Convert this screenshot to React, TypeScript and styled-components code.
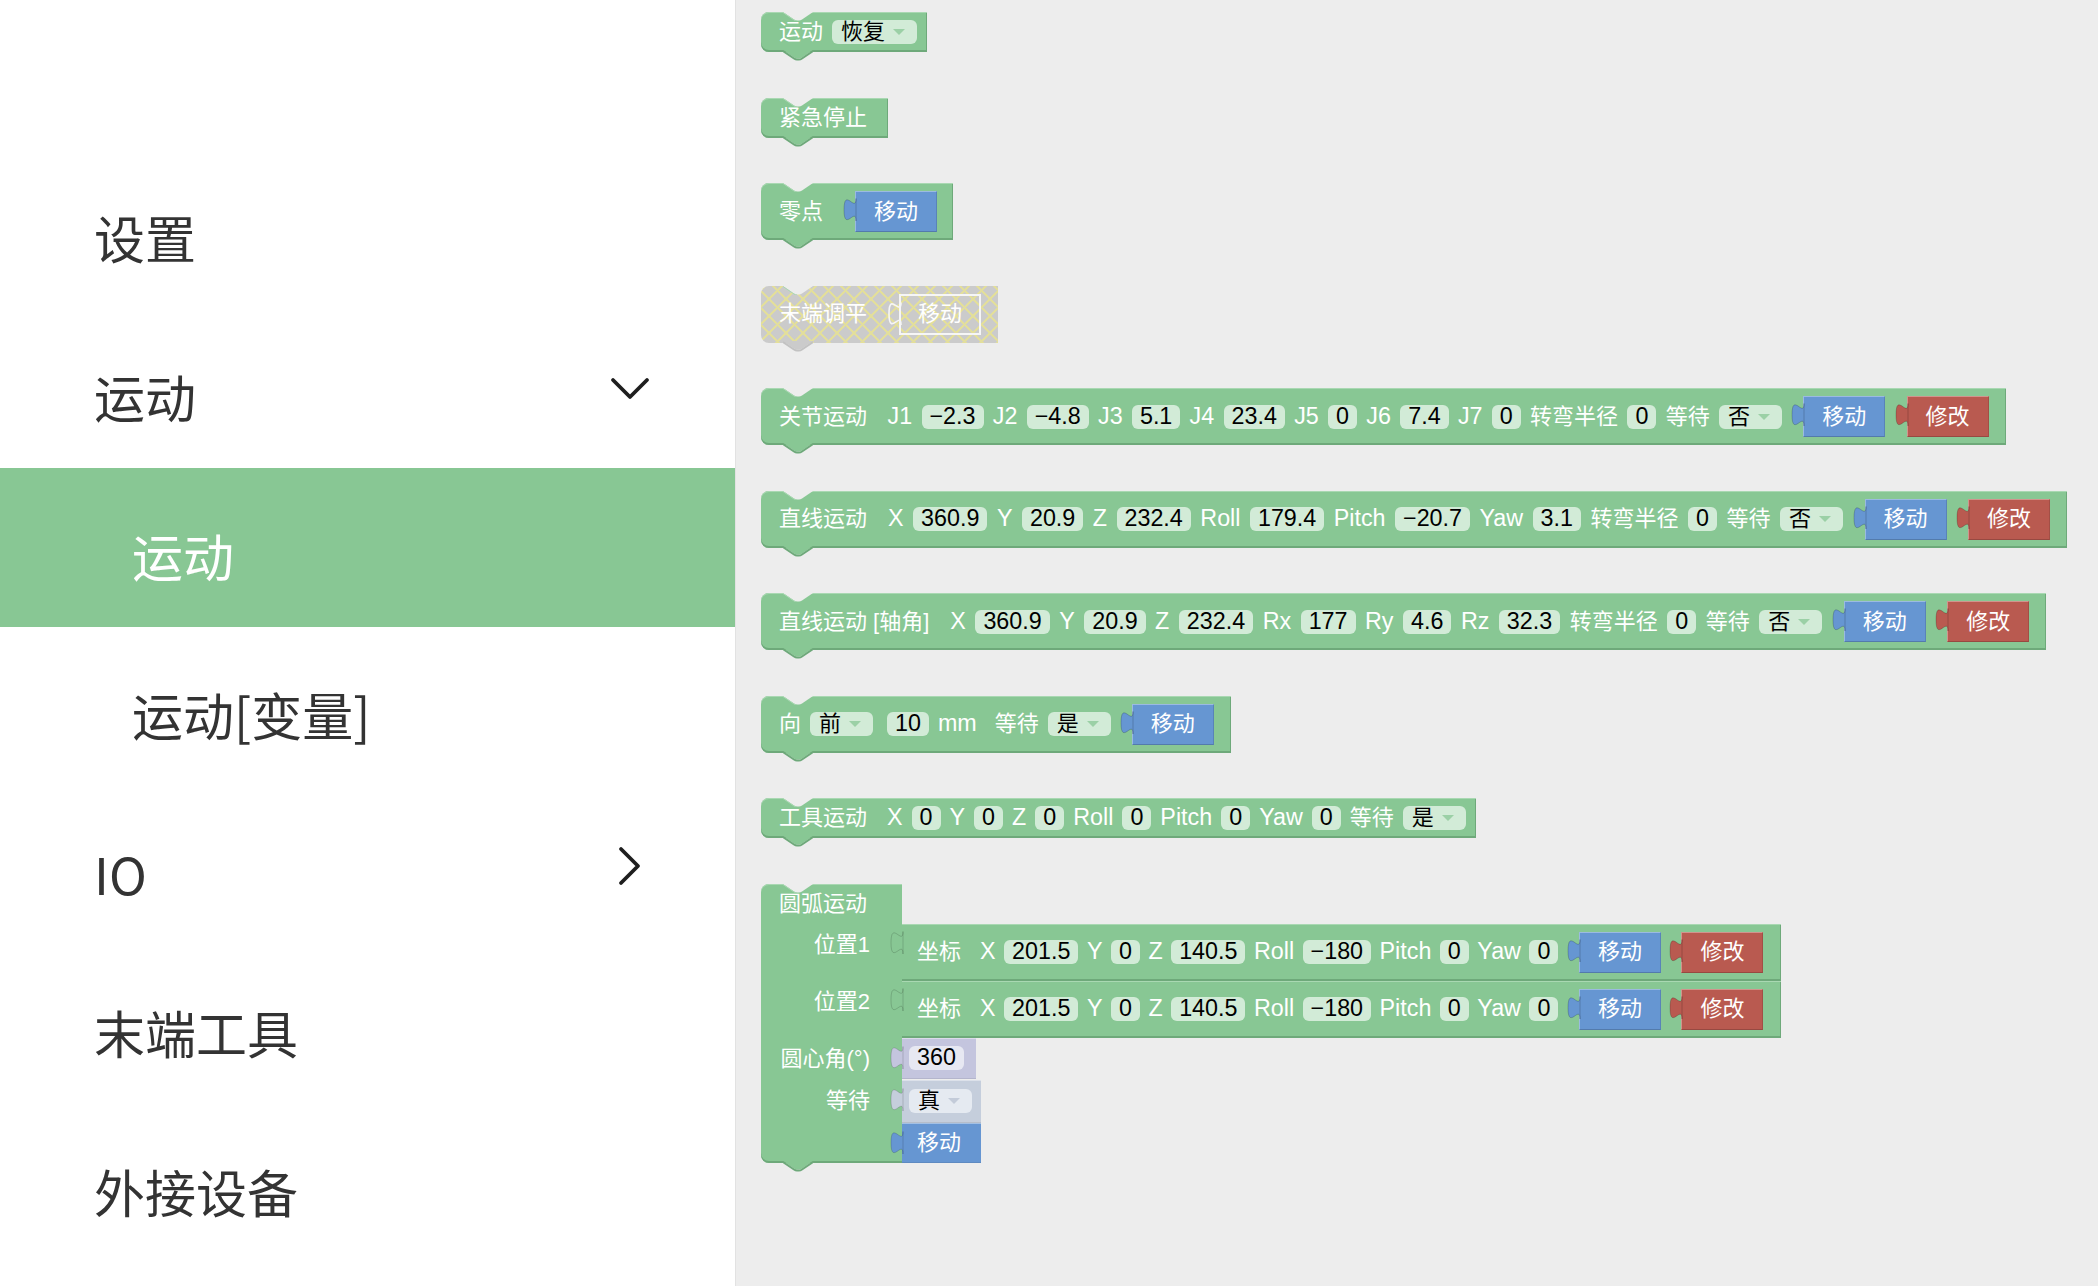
import React from "react";
import styled, { createGlobalStyle } from "styled-components";

const GREEN = "#88c794";
const GREEN_LIGHT = "#a9d8b2";
const GREEN_DARK = "#6ea97a";
const CANVAS = "#ededed";
const BLUE = "#6696d2";
const RED = "#b95a50";
const LAVENDER = "#c4c5de";
const SLATE = "#c5cedc";

const GlobalStyle = createGlobalStyle`
  html, body { margin: 0; padding: 0; }
  body {
    font-family: "Liberation Sans", "Noto Sans CJK SC", sans-serif;
    background: ${CANVAS};
  }
`;

const Page = styled.div`
  display: flex;
  width: 2098px;
  height: 1286px;
  overflow: hidden;
`;

/* ---------- sidebar ---------- */

const Sidebar = styled.nav`
  flex: none;
  width: 736px;
  box-sizing: border-box;
  padding-top: 150px;
  background: #fff;
  border-right: 1px solid #e2e2e2;
`;

const MenuItem = styled.div<{ $active?: boolean; $sub?: boolean }>`
  display: flex;
  align-items: center;
  justify-content: space-between;
  height: 159px;
  padding: 0 85px 0 ${(p) => (p.$sub ? 132 : 94)}px;
  background: ${(p) => (p.$active ? GREEN : "transparent")};
  color: ${(p) => (p.$active ? "#fff" : "#333")};
`;

const MenuLabel = styled.span`
  padding-top: 16px;
  font-family: "Noto Sans CJK SC", "Liberation Sans", sans-serif;
  font-size: 51px;
  line-height: 1;
  white-space: nowrap;
`;

const Chevron = styled.svg`
  flex: none;
`;

type MenuEntry = { label: string; sub?: boolean; active?: boolean; chevron?: "down" | "right" };

const menu: MenuEntry[] = [
  { label: "设置" },
  { label: "运动", chevron: "down" },
  { label: "运动", sub: true, active: true },
  { label: "运动[变量]", sub: true },
  { label: "IO", chevron: "right" },
  { label: "末端工具" },
  { label: "外接设备" },
];

const ChevronIcon = ({ dir }: { dir: "down" | "right" }) => (
  <Chevron width="40" height="40" viewBox="0 0 40 40">
    <polyline
      points={dir === "down" ? "3,11 20,28 37,11" : "11,3 28,20 11,37"}
      fill="none"
      stroke="#1e1e1e"
      strokeWidth="3.8"
      strokeLinecap="round"
      strokeLinejoin="round"
    />
  </Chevron>
);

/* ---------- blockly workspace ---------- */

const Workspace = styled.main`
  flex: 1;
  display: flex;
  flex-direction: column;
  align-items: flex-start;
  gap: 45.5px;
  padding: 12px 0 0 25px;
  background: ${CANVAS};
`;

const BlockBody = styled.div<{ $padRight?: number; $disabled?: boolean; $child?: boolean; $gap?: number }>`
  position: relative;
  flex: none;
  display: flex;
  align-items: center;
  gap: ${(p) => p.$gap ?? 9}px;
  box-sizing: border-box;
  min-height: 40px;
  padding: 8px ${(p) => p.$padRight ?? 10}px 8px ${(p) => (p.$child ? 15 : 18)}px;
  border-radius: ${(p) => (p.$child ? "0" : "8px 0 0 8px")};
  background-color: ${(p) => (p.$disabled ? "#cbcbcb" : GREEN)};
  background-image: ${(p) =>
    p.$disabled
      ? "repeating-linear-gradient(45deg, #e2de9c 0 2px, transparent 2px 12px), repeating-linear-gradient(-45deg, #e2de9c 0 2px, transparent 2px 12px)"
      : "none"};
  box-shadow: ${(p) =>
    p.$disabled
      ? "none"
      : `inset 0 1px 0 ${GREEN_LIGHT}, inset 0 -2px 0 ${GREEN_DARK}, inset -1px 0 0 ${GREEN_DARK}`};
  color: #fff;
  font-size: 22px;
  line-height: 1;
  white-space: nowrap;
`;

const Label = styled.span`
  flex: none;
`;

/* latin axis names render a touch larger than the CJK captions */
const Axis = styled(Label)`
  font-size: 23.3px;
`;

/* an empty flex item: adds one more gap, nudged by $w */
const Gap = styled.span<{ $w?: number }>`
  flex: none;
  width: 0;
  margin-left: ${(p) => p.$w ?? 2}px;
`;

const Field = styled.span<{ $bg?: string }>`
  flex: none;
  display: inline-flex;
  align-items: center;
  gap: 8px;
  height: 24px;
  padding: 0 8px;
  border-radius: 6px;
  background: ${(p) => p.$bg ?? "#d2ebd7"};
  color: #000;
  font-size: 23.3px;
`;

const DropText = styled.span`
  font-size: 22px;
  padding-left: 1px;
`;

const Arrow = styled.span<{ $color?: string }>`
  width: 0;
  height: 0;
  margin-right: 4px;
  border-left: 6px solid transparent;
  border-right: 6px solid transparent;
  border-top: 6px solid ${(p) => p.$color ?? "#9bd0a6"};
`;

const NotchTop = styled.svg`
  position: absolute;
  top: 0;
  left: 22px;
`;

const NotchBottom = styled.svg`
  position: absolute;
  top: calc(100% - 2px);
  left: 22px;
`;

const Connectors = ({ fill, edge = GREEN_DARK }: { fill: string; edge?: string }) => (
  <>
    <NotchTop width="30" height="9" viewBox="0 0 30 9">
      <path d="M0,0 L11,7.5 Q12.5,8.5 14,8.5 L16,8.5 Q17.5,8.5 19,7.5 L30,0 Z" fill={CANVAS} />
      <path d="M0,0.5 L11,8 Q12.5,9 14,9" fill="none" stroke={GREEN_LIGHT} strokeWidth="1" />
    </NotchTop>
    <NotchBottom width="30" height="11" viewBox="0 0 30 11">
      <path d="M0,0 L11,7.5 Q12.5,8.5 14,8.5 L16,8.5 Q17.5,8.5 19,7.5 L30,0 Z" fill={fill} />
      <path d="M0,1 L11,8.5 Q12.5,9.5 14,9.5 L16,9.5 Q17.5,9.5 19,8.5 L30,1" fill="none" stroke={edge} strokeWidth="2" />
    </NotchBottom>
  </>
);

const ValueBox = styled.div<{ $bg: string }>`
  position: relative;
  flex: none;
  display: flex;
  align-items: center;
  justify-content: center;
  box-sizing: border-box;
  width: 82px;
  height: 41px;
  margin-left: 12px;
  background: ${(p) => p.$bg};
  border: 1px solid rgba(255, 255, 255, 0.35);
  border-right-color: rgba(0, 0, 0, 0.12);
  border-bottom-color: rgba(0, 0, 0, 0.18);
  color: #fff;
`;

const GhostBox = styled.div`
  position: relative;
  flex: none;
  display: flex;
  align-items: center;
  justify-content: center;
  box-sizing: border-box;
  width: 82px;
  height: 41px;
  margin-left: 12px;
  border: 2px solid #f6f6f6;
  color: #fff;
`;

const TabSvg = styled.svg`
  position: absolute;
  left: -13px;
  top: -1px;
`;

const TAB_PATH = "M13,7.5 C13,22.5 1,-4.5 1,18.75 S13,15 13,30";

const Tab = ({ fill, stroke = "rgba(0,0,0,0.18)", width = 1 }: { fill: string; stroke?: string; width?: number }) => (
  <TabSvg width="14" height="34" viewBox="0 0 14 34">
    <path d={fill === "none" ? TAB_PATH : TAB_PATH + " Z"} fill={fill} stroke={stroke} strokeWidth={width} />
  </TabSvg>
);

const Value = ({ text, bg }: { text: string; bg: string }) => (
  <ValueBox $bg={bg}>
    <Tab fill={bg} />
    {text}
  </ValueBox>
);

const Dropdown = ({ text, bg, arrow }: { text: string; bg?: string; arrow?: string }) => (
  <Field $bg={bg}>
    <DropText>{text}</DropText>
    <Arrow $color={arrow} />
  </Field>
);

/* ---------- 圆弧运动 ---------- */

const Arc = styled.div`
  position: relative;
  flex: none;
  display: flex;
  flex-direction: column;
  color: #fff;
  font-size: 22px;
  line-height: 1;
`;

const ArcRow = styled.div`
  display: flex;
  align-items: stretch;
`;

const ArcCell = styled.div<{ $head?: boolean; $last?: boolean; $h?: number }>`
  flex: none;
  display: flex;
  align-items: flex-start;
  justify-content: ${(p) => (p.$head ? "flex-start" : "flex-end")};
  box-sizing: border-box;
  width: 141px;
  min-height: ${(p) => p.$h ?? 0}px;
  padding: ${(p) => (p.$head ? "0 0 0 18px" : "0 32px 0 0")};
  background: ${GREEN};
  border-radius: ${(p) => (p.$head ? "8px 0 0 0" : p.$last ? "0 0 0 8px" : "0")};
  box-shadow: ${(p) =>
    p.$head
      ? `inset 0 1px 0 ${GREEN_LIGHT}`
      : p.$last
      ? `inset 0 -2px 0 ${GREEN_DARK}`
      : "none"};
`;

const ArcLabel = styled.span<{ $h: number }>`
  display: flex;
  align-items: center;
  height: ${(p) => p.$h}px;
  white-space: nowrap;
`;

const SlotBlock = styled.div<{ $bg: string; $w: number; $h: number }>`
  position: relative;
  flex: none;
  display: flex;
  align-items: center;
  box-sizing: border-box;
  width: ${(p) => p.$w}px;
  height: ${(p) => p.$h}px;
  padding-left: 7px;
  background: ${(p) => p.$bg};
  border-top: 1px solid rgba(255, 255, 255, 0.4);
  border-bottom: 1px solid rgba(0, 0, 0, 0.08);
`;

const SlotTab = styled(TabSvg)`
  left: -12px;
  top: 0;
`;

const SlotTabShape = ({ fill }: { fill: string }) => (
  <SlotTab width="14" height="34" viewBox="0 0 14 34">
    <path d={TAB_PATH + " Z"} fill={fill} stroke="rgba(0,0,0,0.15)" />
  </SlotTab>
);

const SlotText = styled.span`
  padding-left: 8px;
`;

const MoveAndEdit = () => (
  <>
    <Value text="移动" bg={BLUE} />
    <Value text="修改" bg={RED} />
  </>
);

const PositionBlock = () => (
  <BlockBody $child $padRight={18} $gap={8.5}>
    <SlotTabShape fill={GREEN} />
    <Label>坐标</Label>
    <Gap />
    <Axis>X</Axis>
    <Field>201.5</Field>
    <Axis>Y</Axis>
    <Field>0</Field>
    <Axis>Z</Axis>
    <Field>140.5</Field>
    <Axis>Roll</Axis>
    <Field>−180</Field>
    <Axis>Pitch</Axis>
    <Field>0</Field>
    <Axis>Yaw</Axis>
    <Field>0</Field>
    <MoveAndEdit />
  </BlockBody>
);

export default function App() {
  return (
    <Page>
      <GlobalStyle />
      <Sidebar>
        {menu.map((m, i) => (
          <MenuItem key={i} $active={m.active} $sub={m.sub}>
            <MenuLabel>{m.label}</MenuLabel>
            {m.chevron && <ChevronIcon dir={m.chevron} />}
          </MenuItem>
        ))}
      </Sidebar>

      <Workspace>
        <BlockBody>
          <Connectors fill={GREEN} />
          <Label>运动</Label>
          <Dropdown text="恢复" />
        </BlockBody>

        <BlockBody>
          <Connectors fill={GREEN} />
          <Label>紧急停止</Label>
          <Gap />
        </BlockBody>

        <BlockBody $padRight={16}>
          <Connectors fill={GREEN} />
          <Label>零点</Label>
          <Gap />
          <Value text="移动" bg={BLUE} />
        </BlockBody>

        <BlockBody $disabled $padRight={17}>
          <Connectors fill="#cbcbcb" edge="#c2c2c2" />
          <Label>末端调平</Label>
          <Gap />
          <GhostBox>
            <Tab fill="none" stroke="#f6f6f6" width={1.6} />
            移动
          </GhostBox>
        </BlockBody>

        <BlockBody $padRight={17} $gap={9.3}>
          <Connectors fill={GREEN} />
          <Label>关节运动</Label>
          <Gap />
          <Axis>J1</Axis>
          <Field>−2.3</Field>
          <Axis>J2</Axis>
          <Field>−4.8</Field>
          <Axis>J3</Axis>
          <Field>5.1</Field>
          <Axis>J4</Axis>
          <Field>23.4</Field>
          <Axis>J5</Axis>
          <Field>0</Field>
          <Axis>J6</Axis>
          <Field>7.4</Field>
          <Axis>J7</Axis>
          <Field>0</Field>
          <Label>转弯半径</Label>
          <Field>0</Field>
          <Label>等待</Label>
          <Dropdown text="否" />
          <MoveAndEdit />
        </BlockBody>

        <BlockBody $padRight={17} $gap={9.5}>
          <Connectors fill={GREEN} />
          <Label>直线运动</Label>
          <Gap />
          <Axis>X</Axis>
          <Field>360.9</Field>
          <Axis>Y</Axis>
          <Field>20.9</Field>
          <Axis>Z</Axis>
          <Field>232.4</Field>
          <Axis>Roll</Axis>
          <Field>179.4</Field>
          <Axis>Pitch</Axis>
          <Field>−20.7</Field>
          <Axis>Yaw</Axis>
          <Field>3.1</Field>
          <Label>转弯半径</Label>
          <Field>0</Field>
          <Label>等待</Label>
          <Dropdown text="否" />
          <MoveAndEdit />
        </BlockBody>

        <BlockBody $padRight={17} $gap={9.5}>
          <Connectors fill={GREEN} />
          <Label>直线运动 [轴角]</Label>
          <Gap />
          <Axis>X</Axis>
          <Field>360.9</Field>
          <Axis>Y</Axis>
          <Field>20.9</Field>
          <Axis>Z</Axis>
          <Field>232.4</Field>
          <Axis>Rx</Axis>
          <Field>177</Field>
          <Axis>Ry</Axis>
          <Field>4.6</Field>
          <Axis>Rz</Axis>
          <Field>32.3</Field>
          <Label>转弯半径</Label>
          <Field>0</Field>
          <Label>等待</Label>
          <Dropdown text="否" />
          <MoveAndEdit />
        </BlockBody>

        <BlockBody $padRight={17}>
          <Connectors fill={GREEN} />
          <Label>向</Label>
          <Dropdown text="前" />
          <Gap $w={-4} />
          <Field>10</Field>
          <Axis>mm</Axis>
          <Gap $w={0} />
          <Label>等待</Label>
          <Dropdown text="是" />
          <Value text="移动" bg={BLUE} />
        </BlockBody>

        <BlockBody>
          <Connectors fill={GREEN} />
          <Label>工具运动</Label>
          <Gap />
          <Axis>X</Axis>
          <Field>0</Field>
          <Axis>Y</Axis>
          <Field>0</Field>
          <Axis>Z</Axis>
          <Field>0</Field>
          <Axis>Roll</Axis>
          <Field>0</Field>
          <Axis>Pitch</Axis>
          <Field>0</Field>
          <Axis>Yaw</Axis>
          <Field>0</Field>
          <Label>等待</Label>
          <Dropdown text="是" />
        </BlockBody>

        <Arc>
          <Connectors fill={GREEN} />
          <ArcRow>
            <ArcCell $head>
              <ArcLabel $h={40}>圆弧运动</ArcLabel>
            </ArcCell>
          </ArcRow>
          <ArcRow>
            <ArcCell>
              <ArcLabel $h={42}>位置1</ArcLabel>
            </ArcCell>
            <PositionBlock />
          </ArcRow>
          <ArcRow>
            <ArcCell>
              <ArcLabel $h={42}>位置2</ArcLabel>
            </ArcCell>
            <PositionBlock />
          </ArcRow>
          <ArcRow>
            <ArcCell>
              <ArcLabel $h={42}>圆心角(°)</ArcLabel>
            </ArcCell>
            <SlotBlock $bg={LAVENDER} $w={74} $h={41}>
              <SlotTabShape fill={LAVENDER} />
              <Field $bg="#e7e8f2">360</Field>
            </SlotBlock>
          </ArcRow>
          <ArcRow>
            <ArcCell>
              <ArcLabel $h={42}>等待</ArcLabel>
            </ArcCell>
            <SlotBlock $bg={SLATE} $w={79} $h={43}>
              <SlotTabShape fill={SLATE} />
              <Dropdown text="真" bg="#e5eaf1" arrow="#c3cbd9" />
            </SlotBlock>
          </ArcRow>
          <ArcRow>
            <ArcCell $last $h={40} />
            <SlotBlock $bg={BLUE} $w={79} $h={40}>
              <SlotTabShape fill={BLUE} />
              <SlotText>移动</SlotText>
            </SlotBlock>
          </ArcRow>
        </Arc>
      </Workspace>
    </Page>
  );
}
